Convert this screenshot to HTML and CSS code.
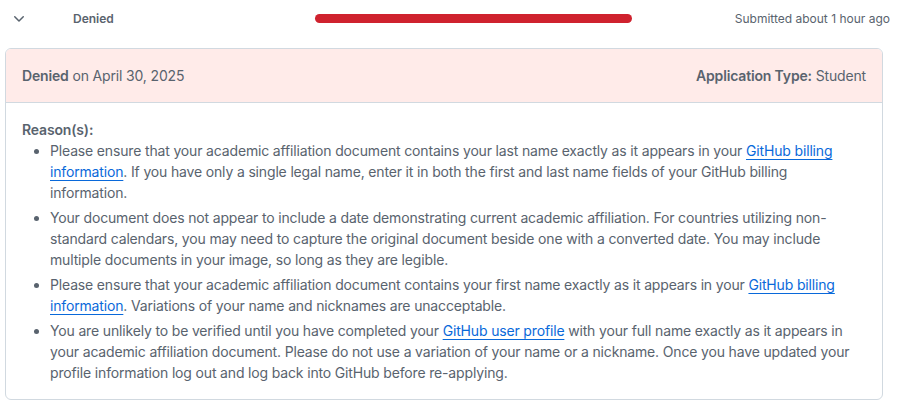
FILE: index.html
```html
<!DOCTYPE html>
<html>
<head>
<meta charset="utf-8">
<link rel="stylesheet" href="styles.css">
</head>
<body>
<div class="row">
  <div class="chev"><svg width="16" height="16" viewBox="0 0 16 16"><path fill="#59636e" d="M12.78 5.22a.749.749 0 0 1 0 1.06l-4.25 4.25a.749.749 0 0 1-1.06 0L3.22 6.28a.749.749 0 1 1 1.06-1.06L8 8.939l3.72-3.719a.749.749 0 0 1 1.06 0Z"/></svg></div>
  <div class="status">Denied</div>
  <div class="barwrap"><div class="bar"></div></div>
  <div class="submitted">Submitted about 1 hour ago</div>
</div>
<div class="card">
  <div class="card-head">
    <div><b>Denied</b> on April 30, 2025</div>
    <div><b>Application Type:</b> Student</div>
  </div>
  <div class="card-body">
    <div class="reason-title">Reason(s):</div>
    <ul class="reasons">
      <li>Please ensure that your academic affiliation document contains your last name exactly as it appears in your <a href="#">GitHub billing information</a>. If you have only a single legal name, enter it in both the first and last name fields of your GitHub billing information.</li>
      <li>Your document does not appear to include a date demonstrating current academic affiliation. For countries utilizing non-standard calendars, you may need to capture the original document beside one with a converted date. You may include multiple documents in your image, so long as they are legible.</li>
      <li>Please ensure that your academic affiliation document contains your first name exactly as it appears in your <a href="#">GitHub billing information</a>. Variations of your name and nicknames are unacceptable.</li>
      <li>You are unlikely to be verified until you have completed your <a href="#">GitHub user profile</a> with your full name exactly as it appears in your academic affiliation document. Please do not use a variation of your name or a nickname. Once you have updated your profile information log out and log back into GitHub before re-applying.</li>
    </ul>
  </div>
</div>
</body>
</html>
```
FILE: styles.css
```css
* { box-sizing: border-box; }
body {
  margin: 0;
  background: #fff;
  font-family: Inter, "Noto Sans", "Liberation Sans", sans-serif;
  color: #59636e;
}
.row {
  display: flex;
  align-items: center;
  height: 37px;
  padding: 0 8px 0 11px;
  font-size: 12px;
}
.chev { width: 16px; height: 16px; display: flex; }
.status {
  margin-left: 46px;
  width: 242px;
  font-weight: 600;
}
.barwrap { width: 317px; }
.bar {
  height: 9px;
  border-radius: 5px;
  background: #cf222e;
}
.submitted { margin-left: auto; }
.card {
  margin: 11px 15px 0 5px;
  border: 1px solid #d1d9e0;
  border-radius: 6px;
  overflow: hidden;
  font-size: 14px;
  line-height: 21px;
  letter-spacing: -0.16px;
}
.card-head {
  display: flex;
  justify-content: space-between;
  background: #ffebe9;
  padding: 16px 16px;
  border-bottom: 1px solid #d1d9e0;
}
.card-head b { font-weight: 600; }
.card-body { padding: 16px 24px 16px 16px; }
.reason-title { font-weight: 600; }
.reasons {
  margin: 0;
  padding-left: 28px;
}
.reasons li + li { margin-top: 4px; }
.reasons a {
  color: #0969da;
  text-decoration: underline;
  text-underline-offset: 3px;
}
```
